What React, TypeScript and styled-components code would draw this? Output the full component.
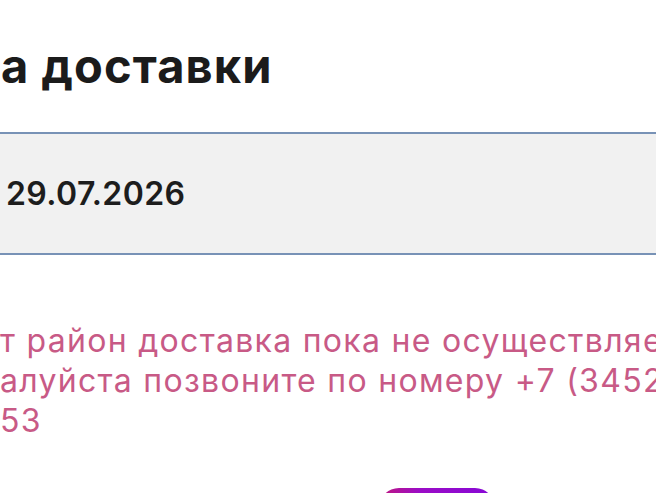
import React from 'react';
import styled, { createGlobalStyle } from 'styled-components';

const GlobalStyle = createGlobalStyle`
  html, body {
    margin: 0;
    padding: 0;
    background: #ffffff;
    overflow: hidden;
  }
  body {
    font-family: Inter, "Noto Sans", sans-serif;
  }
`;

const Page = styled.div`
  width: 656px;
  height: 493px;
  overflow: hidden;
  display: flex;
  flex-direction: column;
`;

const Title = styled.h2`
  margin: 38px 0 0 1px;
  font-size: 47px;
  line-height: 56px;
  font-weight: 700;
  color: #1b1b1b;
  white-space: nowrap;
  letter-spacing: 1.1px;
`;

const DateField = styled.div`
  margin-top: 38px;
  height: 119px;
  background: #f1f1f1;
  border-top: 2px solid #7892b6;
  border-bottom: 2px solid #7892b6;
  display: flex;
  align-items: center;
  padding-left: 6px;
`;

const DateValue = styled.span`
  font-size: 32px;
  font-weight: 600;
  color: #1d1d1d;
  letter-spacing: 0.4px;
`;

const Notice = styled.div`
  margin-top: 66px;
  display: flex;
  flex-direction: column;
  color: #c85a86;
  font-size: 32px;
  line-height: 40px;
  font-weight: 400;
  letter-spacing: 1.3px;
`;

const NoticeLine = styled.span`
  white-space: nowrap;
`;

const Actions = styled.div`
  margin-top: auto;
  display: flex;
  padding-left: 379px;
`;

const SubmitButton = styled.button`
  width: 116px;
  height: 40px;
  margin-bottom: -35px;
  border: none;
  border-radius: 20px;
  background: linear-gradient(90deg, #c0177c 0%, #9b0cc6 35%, #8608d6 100%);
`;

export default function App() {
  return (
    <Page>
      <GlobalStyle />
      <Title>а доставки</Title>
      <DateField>
        <DateValue>29.07.2026</DateValue>
      </DateField>
      <Notice>
        <NoticeLine>т район доставка пока не осуществляется.</NoticeLine>
        <NoticeLine>алуйста позвоните по номеру +7 (3452) 00-00-</NoticeLine>
        <NoticeLine>53</NoticeLine>
      </Notice>
      <Actions>
        <SubmitButton />
      </Actions>
    </Page>
  );
}
